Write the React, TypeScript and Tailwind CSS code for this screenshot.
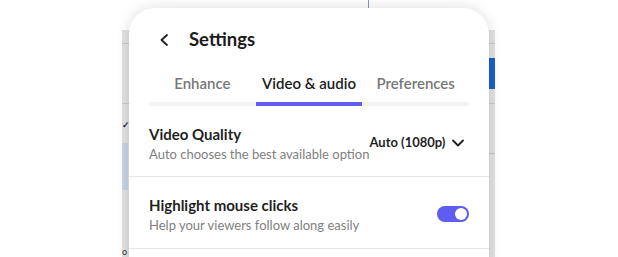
import React, { useState } from 'react';

const tabs = ['Enhance', 'Video & audio', 'Preferences'];

const BackgroundWindow: React.FC = () => (
    <div className="ml-[122px] mt-[30px] w-[373px] h-[227px] bg-[#e2e2e2] relative">
        <div className="h-[13px]" />
        <div className="border-t border-[#c9c9c9] h-[60px] flex justify-end">
            <div className="mt-[14px] w-[30px] h-[31px] bg-[#1b5fd1] text-white text-[13px] font-bold flex items-center pl-[1px] overflow-hidden">
                b
            </div>
        </div>
        <div className="border-t border-[#c9c9c9] flex">
            <div className="w-[6px] flex flex-col">
                <div className="mt-[15px] h-[10px] flex items-center text-[#1e2a4a] text-[9px] font-bold leading-none">✓</div>
                <div className="mt-[14px] h-[47px] bg-[#c9d3e3]" />
            </div>
            <div className="flex-1" />
            <div className="w-[6px] mt-[49px] border-t border-[#c4c4c4] h-[100px]" />
        </div>
        <div className="absolute left-0 bottom-[1px] text-[9px] text-[#333] leading-none">o</div>
    </div>
);

const Toggle: React.FC<{ on: boolean; onChange: () => void }> = ({ on, onChange }) => (
    <button
        onClick={onChange}
        className={`mt-[2px] w-[32px] h-[16px] rounded-full flex items-center px-[2px] ${on ? 'bg-[#5f5cf1] justify-end' : 'bg-[#d4d4d4] justify-start'}`}
    >
        <span className="w-[12px] h-[12px] rounded-full bg-white block" />
    </button>
);

const SettingText: React.FC<{ title: string; hint: string }> = ({ title, hint }) => (
    <div className="mt-[4px] flex flex-col whitespace-nowrap">
        <span className="text-[15px] leading-[20px] font-bold text-[#1f1f1f]">{title}</span>
        <span className="mt-[1px] text-[13px] leading-[18px] text-[#808080]">{hint}</span>
    </div>
);

export default function App() {
    const [active, setActive] = useState(1);
    const [highlight, setHighlight] = useState(true);

    return (
        <div className="relative w-[618px] h-[257px] bg-white overflow-hidden" style={{ fontFamily: 'Lato, "Noto Sans", sans-serif' }}>
            <BackgroundWindow />
            <div className="absolute left-[368px] top-[-6px] w-[20px] h-[14px] rounded-tl-[6px] border-l border-t border-[#8a94a8]" />

            {/* settings panel */}
            <div className="absolute left-[129px] top-[8px] w-[360px] h-[260px] bg-white rounded-t-[26px] shadow-[0_0_14px_rgba(0,0,0,0.14)]">
                <div className="px-[20px] pt-[20px]">
                    <div className="flex items-center h-[24px]">
                        <svg width="16" height="16" viewBox="0 0 16 16" className="ml-[7px]" fill="none">
                            <path d="M11 3 L5.5 8 L11 13" stroke="#1f1f1f" strokeWidth="1.8" strokeLinecap="round" strokeLinejoin="round" />
                        </svg>
                        <span className="ml-[17px] text-[18.5px] font-bold text-[#1c1c1c] whitespace-nowrap">Settings</span>
                    </div>

                    <div className="mt-[18px] grid grid-cols-3">
                        {tabs.map((t, i) => (
                            <button
                                key={t}
                                onClick={() => setActive(i)}
                                className={`h-[32px] flex items-start justify-center pt-[2px] text-[15px] font-semibold whitespace-nowrap ${active === i ? 'text-[#1c1c1c]' : 'text-[#777777]'}`}
                            >
                                {t}
                            </button>
                        ))}
                    </div>
                    <div className="h-[4px] bg-[#f4f4f4] rounded-full grid grid-cols-3">
                        {tabs.map((t, i) => (
                            <div key={t} className={active === i ? 'bg-[#5f5cf1]' : ''} />
                        ))}
                    </div>
                </div>

                <div className="h-[71px] px-[20px] flex items-center justify-between border-b border-[#e6e6e6]">
                    <SettingText title="Video Quality" hint="Auto chooses the best available option" />
                    <button className="mt-[4px] mr-[6px] flex items-center gap-[7px] text-[13px] font-bold text-[#1f1f1f] whitespace-nowrap">
                        Auto (1080p)
                        <svg width="12" height="8" viewBox="0 0 12 8" fill="none">
                            <path d="M1 1.5 L6 6.5 L11 1.5" stroke="#1f1f1f" strokeWidth="1.8" strokeLinecap="round" strokeLinejoin="round" />
                        </svg>
                    </button>
                </div>

                <div className="h-[72px] px-[20px] flex items-center justify-between border-b border-[#e6e6e6]">
                    <SettingText title="Highlight mouse clicks" hint="Help your viewers follow along easily" />
                    <Toggle on={highlight} onChange={() => setHighlight(!highlight)} />
                </div>
            </div>
        </div>
    );
}
